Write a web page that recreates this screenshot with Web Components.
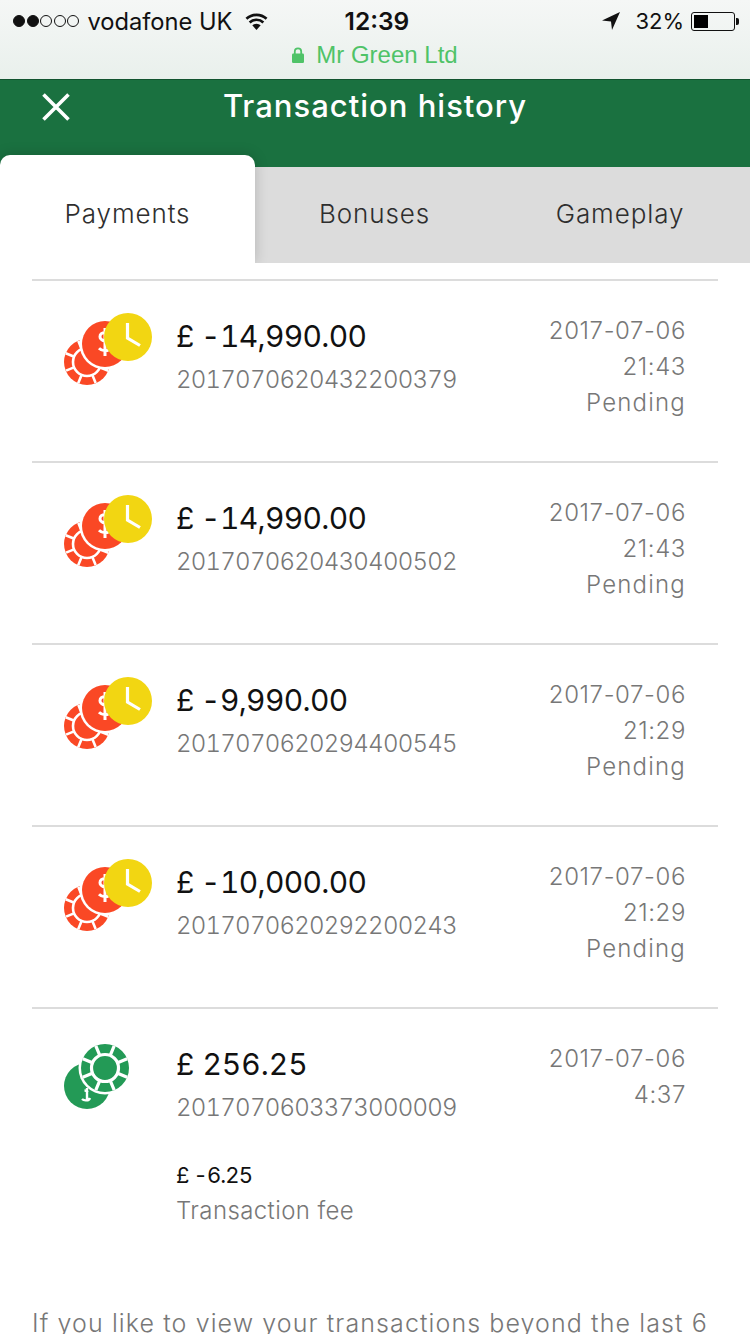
<!DOCTYPE html>
<html lang="en"><head><meta charset="utf-8"><title>Transaction history</title>
<style>
html,body{margin:0;padding:0;background:#fff;height:1334px;overflow:hidden}
body{font-family:Inter,"Open Sans",sans-serif}
</style></head><body>
<app-screen>
  <ios-status slot="top"></ios-status>
  <app-header slot="top">Transaction history</app-header>
  <tab-bar slot="top"></tab-bar>
  <tx-row kind="pending" amount="£ -14,990.00" ref="2017070620432200379" date="2017-07-06" time="21:43" status="Pending"></tx-row>
  <tx-row kind="pending" amount="£ -14,990.00" ref="2017070620430400502" date="2017-07-06" time="21:43" status="Pending"></tx-row>
  <tx-row kind="pending" amount="£ -9,990.00" ref="2017070620294400545" date="2017-07-06" time="21:29" status="Pending"></tx-row>
  <tx-row kind="pending" amount="£ -10,000.00" ref="2017070620292200243" date="2017-07-06" time="21:29" status="Pending"></tx-row>
  <tx-row kind="done" amount="£ 256.25" ref="2017070603373000009" date="2017-07-06" time="4:37" fee="£ -6.25" feelabel="Transaction fee"></tx-row>
  <foot-note>If you like to view your transactions beyond the last 6</foot-note>
</app-screen>
<script>
const FONT='Inter,"Open Sans",sans-serif';
function shadow(el,html){el.attachShadow({mode:'open'}).innerHTML=html;}
customElements.define('app-screen',class extends HTMLElement{constructor(){super();shadow(this,`<style>
:host{display:block;width:750px;height:1334px;overflow:hidden;background:#fff}
.list{display:block;margin:16px 32px 0}
</style><slot name="top"></slot><div class="list"><slot></slot></div>`);}});
customElements.define('ios-status',class extends HTMLElement{constructor(){super();shadow(this,`<style>
:host{display:block;height:79px;background:linear-gradient(#f5f7f6,#e9f0ec);font-family:Inter,"Liberation Sans",Arial,sans-serif;color:#111;box-sizing:border-box}
.row{display:flex;align-items:center;height:42px;padding:0 0 0 13px;font-size:23.7px}
.dots{display:flex;gap:1.600px;margin-right:8px}
.dots i{width:12px;height:12px;border-radius:50%;border:1.200px solid #111;box-sizing:border-box;display:block}
.dots i.f{background:#111}
.wifi{margin-left:11px;width:25px;height:19px;display:block}
.time{font-weight:600;font-size:24.5px;margin-left:76px;width:66px;white-space:nowrap}
.right{margin-left:auto;display:flex;align-items:center;padding-right:11px}
.pct{font-size:22px}
.arrow{width:20px;height:20px;display:block;margin-right:14px}
.batt{margin-left:7px;display:flex;align-items:center}
.batt b{display:block;width:44px;height:19px;border:1.200px solid #111;border-radius:3px;box-sizing:border-box;padding:2px}
.batt b::before{content:"";display:block;width:14px;height:100%;background:#000}
.batt s{display:block;width:3px;height:7px;background:#111;border-radius:0 2px 2px 0;margin-left:1px}
.site{display:flex;justify-content:center;align-items:center;height:26px;color:#4fc368;font-family:"Liberation Sans",Arial,sans-serif;font-size:24px}
.lock{width:12px;height:16px;margin-right:12px;display:block}
</style>
<div class="row"><span class="dots"><i class="f"></i><i class="f"></i><i></i><i></i><i></i></span><span class="car">vodafone UK</span>
<svg class="wifi" viewBox="0 0 26 20"><path d="M13 19 L8.600 14a6.500 6.500 0 0 1 8.800 0z" fill="#111"/><path d="M5.800 11a10.500 10.500 0 0 1 14.400 0M2.400 7.200a15.500 15.500 0 0 1 21.200 0" fill="none" stroke="#111" stroke-width="2.800"/></svg>
<span class="time">12:39</span>
<span class="right"><svg class="arrow" viewBox="0 0 20 20"><path d="M19 1 L1 9.500 L10 10.500 L11 19z" fill="#111"/></svg><span class="pct">32%</span><span class="batt"><b></b><s></s></span></span></div>
<div class="site"><svg class="lock" viewBox="0 0 12 16"><rect x="0" y="6.500" width="12" height="9.500" rx="1.200" fill="#4fc368"/><path d="M2.800 7V4.500a3.200 3.200 0 0 1 6.400 0V7" fill="none" stroke="#4fc368" stroke-width="1.800"/></svg><span>Mr Green Ltd</span></div>`);}});
customElements.define('app-header',class extends HTMLElement{constructor(){super();shadow(this,`<style>
:host{display:block;height:88px;background:#1a7140;border-top:1px solid #12532f;box-sizing:border-box;color:#fff;font-family:${FONT}}
.bar{display:flex;align-items:flex-start;padding:0 0 0 41px}
svg{width:30px;height:30px;display:block;margin-top:12px}
h1{font-weight:500;font-size:31px;line-height:52px;margin:0;flex:1;text-align:center;padding-right:71px;letter-spacing:1px}
</style><div class="bar"><svg viewBox="0 0 30 30"><path d="M2.500 2.500 27.500 27.500M27.500 2.500 2.500 27.500" stroke="#fff" stroke-width="3.600" fill="none"/></svg><h1><slot></slot></h1></div>`);}});
customElements.define('tab-bar',class extends HTMLElement{constructor(){super();shadow(this,`<style>
:host{display:flex;height:96px;background:#dcdcdc;font-family:${FONT};font-weight:300;color:#2e2e2e;font-size:26px;letter-spacing:.9px}
div{display:flex;align-items:center;justify-content:center;height:92px;padding-bottom:4px;white-space:nowrap}
.on{width:255px;margin-top:-12px;padding-top:12px;background:#fff;border-radius:10px 10px 0 0;box-shadow:0 0 14px rgba(0,0,0,.18);clip-path:inset(-20px -20px 0 -20px)}
.b{width:239px}.c{width:252px;padding-right:4px}
</style><div class="on">Payments</div><div class="b">Bonuses</div><div class="c">Gameplay</div>`);}});
const PENDING=`<svg viewBox="0 2 100 80" width="100" height="80" style="display:block">
<circle cx="23" cy="51" r="23" fill="#fa4825"/>
<g stroke="#fff" stroke-width="2.600"><path d="M0 51H46M23 28V74M7 35 39 67M39 35 7 67" transform="rotate(22.500 23 51)"/></g>
<circle cx="23" cy="51" r="14" fill="#fa4825" stroke="#fff" stroke-width="2.600"/>
<circle cx="41" cy="33" r="25.500" fill="#fff"/><circle cx="41" cy="33" r="23" fill="#fa4825"/>
<path d="M46 23.500c-1.500-1.500-3-2-5-2-3 0-5 1.800-5 4.200 0 6 10.500 3.500 10.500 9.500 0 2.800-2.500 4.500-5.500 4.500-2.500 0-4.500-1-6-2.500M41 17v28" fill="none" stroke="#fff" stroke-width="3"/>
<circle cx="64" cy="26" r="24" fill="#f2d612"/>
<path d="M63.500 12V27L76 34.500" fill="none" stroke="#fff" stroke-width="3.200"/></svg>`;
const DONE=`<svg viewBox="0 13 100 80" width="100" height="80" style="display:block">
<circle cx="23" cy="58" r="23" fill="#239a56"/>
<path d="M24 64c-1-1-2-1.500-3.500-1.500M23 60v12M18 71c2 2 7 2 8-1" fill="none" stroke="#fff" stroke-width="2.400"/>
<circle cx="41" cy="40" r="26.500" fill="#fff"/><circle cx="41" cy="40" r="24" fill="#239a56"/>
<g stroke="#fff" stroke-width="3.200"><path d="M17 40H65M41 16V64M24 23 58 57M58 23 24 57" transform="rotate(22.500 41 40)"/></g>
<circle cx="41" cy="40" r="13.500" fill="#239a56" stroke="#fff" stroke-width="3.200"/></svg>`;
customElements.define('tx-row',class extends HTMLElement{constructor(){super();
const a=n=>this.getAttribute(n);
const fee=a('fee')?`<div class="fee tn">${a('fee')}</div><div class="sub lbl">${a('feelabel')}</div>`:'';
shadow(this,`<style>
:host{display:block;border-top:2px solid #dcdcdc;font-family:${FONT};font-weight:300;color:#777;font-size:24px;line-height:36px;letter-spacing:.6px}
.tn{font-variant-numeric:tabular-nums;font-feature-settings:"tnum"}
.r{display:grid;grid-template-columns:112px 1fr auto;padding:32px 32px 40px;align-items:start}
.amt{color:#111;font-size:30px;line-height:44px;margin-top:1px;white-space:nowrap;font-weight:400;letter-spacing:-.65px}
:host([kind=done]) .amt{letter-spacing:0}
.sub{line-height:36px;white-space:nowrap;margin-top:4px}
.ref{letter-spacing:-.75px}
.fee{color:#111;font-size:22px;line-height:36px;margin-top:31px;font-weight:400;letter-spacing:-.9px}
.sub.lbl{margin-top:0;letter-spacing:.4px}
.d{text-align:right}
.st{letter-spacing:1.200px}
:host([kind=done]) .r{padding-bottom:38px}
</style><div class="r"><div>${a('kind')==='done'?DONE:PENDING}</div><div><div class="amt tn">${a('amount')}</div><div class="sub ref tn">${a('ref')}</div>${fee}</div><div class="d"><div>${a('date')}</div><div>${a('time')}</div>${a('status')?`<div class="st">${a('status')}</div>`:''}</div></div>`);}});
customElements.define('foot-note',class extends HTMLElement{constructor(){super();shadow(this,`<style>
:host{display:block;font-family:${FONT};font-weight:300;color:#777;font-size:25px;line-height:36px;letter-spacing:1.100px;white-space:nowrap;margin-top:38px}
</style><slot></slot>`);}});
</script></body></html>
